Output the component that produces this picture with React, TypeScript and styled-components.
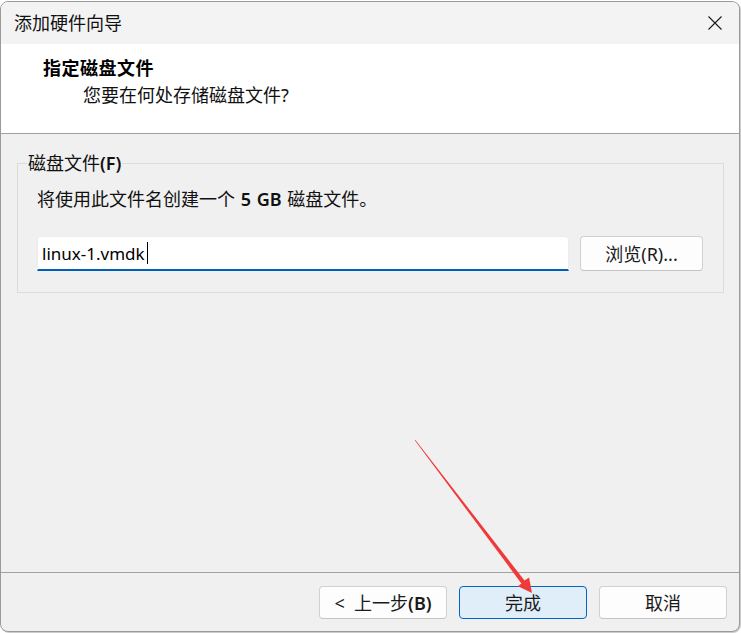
import React from "react";
import styled, { createGlobalStyle } from "styled-components";

const GlobalStyle = createGlobalStyle`
  html, body {
    margin: 0;
    padding: 0;
    background: #ffffff;
  }
  body {
    font-family: "Noto Sans", "Noto Sans CJK SC", sans-serif;
    color: #1a1a1a;
  }
`;

const Page = styled.div`
  position: relative;
  width: 741px;
  height: 633px;
  padding-top: 1px;
  box-sizing: border-box;
`;

const Window = styled.div`
  width: 740px;
  height: 631px;
  box-sizing: border-box;
  border: 1px solid #9a9a9a;
  border-radius: 8px;
  overflow: hidden;
  display: flex;
  flex-direction: column;
  background: #f0f0f0;
  box-shadow: 1px 1px 0 rgba(0, 0, 0, 0.2);
`;

const TitleBar = styled.div`
  height: 42px;
  flex: none;
  display: flex;
  align-items: center;
  justify-content: space-between;
  padding: 0 17px 0 13px;
  background: #f3f3f3;
`;

const Title = styled.span`
  font-size: 18px;
  line-height: 24px;
  color: #111;
`;

const CloseIcon = styled.svg`
  width: 14px;
  height: 14px;
  display: block;
`;

const Header = styled.div`
  flex: none;
  box-sizing: border-box;
  height: 90px;
  background: #ffffff;
  border-bottom: 1px solid #a0a0a0;
  padding: 12px 0 0 42px;
`;

const HeaderTitle = styled.div`
  font-size: 18px;
  line-height: 24px;
  font-weight: 700;
  letter-spacing: 0.5px;
  color: #000;
`;

const HeaderSubtitle = styled.div`
  margin: 3px 0 0 40px;
  font-size: 18px;
  line-height: 24px;
  color: #111;
`;

const Body = styled.div`
  flex: 1;
  padding: 17px 15px 0 16px;
`;

const GroupBox = styled.fieldset`
  margin: 0;
  padding: 12px 19px 21px 19px;
  border: 1px solid #dcdcdc;
  min-width: 0;
`;

const GroupLegend = styled.legend`
  margin-left: -10px;
  padding: 0 1px;
  font-size: 18px;
  line-height: 24px;
  color: #111;
`;

const Hint = styled.div`
  font-size: 18px;
  line-height: 24px;
  color: #111;
  word-spacing: 1px;
`;

const Latin = styled.span`
  font-weight: 600;
`;

const FileRow = styled.div`
  margin-top: 25px;
  display: flex;
  gap: 11px;
`;

const FileField = styled.div`
  width: 532px;
  height: 35px;
  box-sizing: border-box;
  display: flex;
  align-items: center;
  padding: 0 4px;
  background: #ffffff;
  border: 1px solid #ececec;
  border-bottom: 2px solid #005fb8;
  border-radius: 4px 4px 0 0;
  font-size: 17px;
  color: #000;
`;

const Caret = styled.span`
  display: inline-block;
  width: 1px;
  height: 22px;
  margin-left: 2px;
  background: #000;
`;

const Button = styled.button<{ $primary?: boolean; $width?: number }>`
  width: ${(p) => p.$width ?? 128}px;
  height: 33px;
  box-sizing: border-box;
  padding: 0;
  font-family: inherit;
  font-size: 18px;
  line-height: 24px;
  color: #1a1a1a;
  border-radius: 4px;
  background: ${(p) => (p.$primary ? "#e0eef9" : "#fdfdfd")};
  border: 1px solid ${(p) => (p.$primary ? "#0067c0" : "#d0d0d0")};
  border-bottom-color: ${(p) => (p.$primary ? "#0067c0" : "#c4c4c4")};
`;

const BrowseButton = styled(Button)`
  height: 35px;
`;

const Footer = styled.div`
  flex: none;
  border-top: 1px solid #a0a0a0;
  padding: 13px 12px 12px 0;
  display: flex;
  justify-content: flex-end;
  gap: 12px;
`;

const Pointer = styled.svg`
  position: absolute;
  left: 0;
  top: 0;
  width: 741px;
  height: 633px;
  pointer-events: none;
`;

export default function App() {
  return (
    <>
      <GlobalStyle />
      <Page>
        <Window>
          <TitleBar>
            <Title>添加硬件向导</Title>
            <CloseIcon viewBox="0 0 14 14">
              <path d="M0.5 0.5 L13.5 13.5 M13.5 0.5 L0.5 13.5" stroke="#1a1a1a" strokeWidth="1.1" fill="none" />
            </CloseIcon>
          </TitleBar>
          <Header>
            <HeaderTitle>指定磁盘文件</HeaderTitle>
            <HeaderSubtitle>您要在何处存储磁盘文件?</HeaderSubtitle>
          </Header>
          <Body>
            <GroupBox>
              <GroupLegend>
                磁盘文件<Latin>(F)</Latin>
              </GroupLegend>
              <Hint>
                将使用此文件名创建一个 <Latin>5 GB</Latin> 磁盘文件。
              </Hint>
              <FileRow>
                <FileField>
                  linux-1.vmdk
                  <Caret />
                </FileField>
                <BrowseButton $width={123}>浏览(R)...</BrowseButton>
              </FileRow>
            </GroupBox>
          </Body>
          <Footer>
            <Button>
              &lt;&nbsp; 上一步<Latin>(B)</Latin>
            </Button>
            <Button $primary>完成</Button>
            <Button>取消</Button>
          </Footer>
        </Window>
        {/* red callout arrow, widening toward the head */}
        <Pointer viewBox="0 0 741 633">
          <polygon
            points="415.24,439.82 524.5,580.5 529.1,577.6 532,593 517.9,586.2 521.4,583.4 414.76,440.18"
            fill="#f03a3a"
          />
        </Pointer>
      </Page>
    </>
  );
}
